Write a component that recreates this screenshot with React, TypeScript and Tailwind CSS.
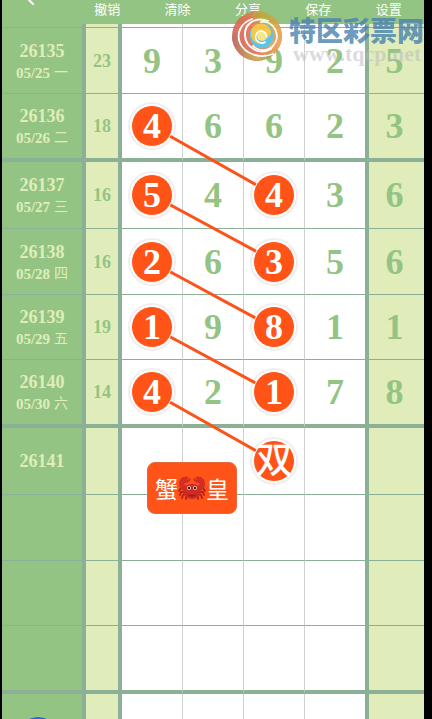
import { Fragment } from 'react';
import { ChevronLeft } from 'lucide-react';

type Link = 'even' | 'thick';

interface Draw {
  issue?: string;
  date?: string;
  weekday?: string;
  sum?: number;
  digits?: (string | number)[];
  picks?: number[];
  link?: Link;
}

const menu = ['撤销', '清除', '分享', '保存', '设置'];

const firstRows: Draw[] = [
  { issue: '26135', date: '05/25', weekday: '一', sum: 23, digits: [9, 3, 9, 2, 5] },
  { issue: '26136', date: '05/26', weekday: '二', sum: 18, digits: [4, 6, 6, 2, 3], picks: [0], link: 'thick' },
];

const groups: Draw[][] = [
  [
    { issue: '26137', date: '05/27', weekday: '三', sum: 16, digits: [5, 4, 4, 3, 6], picks: [0, 2], link: 'even' },
    { issue: '26138', date: '05/28', weekday: '四', sum: 16, digits: [2, 6, 3, 5, 6], picks: [0, 2], link: 'even' },
    { issue: '26139', date: '05/29', weekday: '五', sum: 19, digits: [1, 9, 8, 1, 1], picks: [0, 2], link: 'even' },
    { issue: '26140', date: '05/30', weekday: '六', sum: 14, digits: [4, 2, 1, 7, 8], picks: [0, 2], link: 'thick' },
  ],
  [{ issue: '26141', digits: ['', '', '双', '', ''], picks: [2] }, {}, {}, {}],
];

const groupHeights = ['h-[67px]', 'h-[66px]', 'h-[65px]', 'h-[68px]'];

// runs from the first ball of a row to the third-column ball of the next row
function Connector({ link }: { link: Link }) {
  return (
    <svg
      className={`pointer-events-none absolute left-1/2 top-1/2 z-10 w-[calc(200%+2px)] overflow-visible ${link === 'even' ? 'h-[66px]' : 'h-[69px]'}`}
    >
      <line x1="0" y1="0" x2="100%" y2="100%" stroke="#fb5319" strokeWidth="3" />
    </svg>
  );
}

function Ball({ value, link }: { value: string | number; link?: Link }) {
  return (
    <>
      <span className="absolute left-1/2 top-1/2 size-12 -translate-x-1/2 -translate-y-1/2 rounded-full border-2 border-[#f2eeee] bg-white" />
      {link && <Connector link={link} />}
      <span
        className={`absolute left-1/2 top-1/2 z-20 flex size-[42px] -translate-x-1/2 -translate-y-1/2 items-center justify-center rounded-full border border-white bg-[#ff5317] text-white ${typeof value === 'string' ? 'font-medium' : ''}`}
      >
        {value}
      </span>
    </>
  );
}

function Row({ row, height, thick }: { row: Draw; height: string; thick?: boolean }) {
  const line = thick ? 'border-b-4' : 'border-b';
  return (
    <tr className={height}>
      <th scope="row" className={`${line} border-r-4 border-[#8bb096] bg-[#93c483] p-0 text-center font-bold text-[#e0edbb]`}>
        <div className="text-lg leading-5">{row.issue}</div>
        {row.date && (
          <div className="mt-1 flex items-center justify-center gap-1 text-[15px] leading-4">
            {row.date} <span className="text-sm leading-4 font-normal">{row.weekday}</span>
          </div>
        )}
      </th>
      <td className={`${line} border-r-4 border-[#8bb096] bg-[#e0edbb] p-0 text-center text-lg font-bold text-[#93c483]`}>
        {row.sum}
      </td>
      {[0, 1, 2, 3, 4].map((i) => {
        const value = row.digits?.[i] ?? '';
        const side =
          i === 3
            ? 'border-r-4 border-r-[#8bb096] bg-white'
            : i === 4
              ? 'bg-[#e0edbb] pr-1'
              : 'border-r border-r-[#ccd2ce] bg-white';
        return (
          <td
            key={i}
            className={`relative p-0 ${line} ${side} border-b-[#8bb096] text-center text-4xl leading-none font-bold text-[#93c483]`}
          >
            {row.picks?.includes(i) ? <Ball value={value} link={i === 0 ? row.link : undefined} /> : value}
          </td>
        );
      })}
    </tr>
  );
}

function Crab() {
  return (
    <svg viewBox="0 0 28 24" className="h-6 w-7" aria-hidden="true">
      <g fill="none" stroke="#b3211c" strokeWidth="1.8" strokeLinecap="round" strokeLinejoin="round">
        <path d="M7 14 3 12 1 15M7 16 3 16 2 19M8 18 5 19 4 22M10 19 8 21 8 23" />
        <path d="M21 14 25 12 27 15M21 16 25 16 26 19M20 18 23 19 24 22M18 19 20 21 20 23" />
      </g>
      <path d="M11 1C5 -1 1 3 1 8 1 12 4 14 8 15L10 11C7 10 6 8 7 7 10 7 13 5 13 2L9 4Z" fill="#d42d26" />
      <path d="M17 1C23 -1 27 3 27 8 27 12 24 14 20 15L18 11C21 10 22 8 21 7 18 7 15 5 15 2L19 4Z" fill="#d42d26" />
      <path d="M5 15C6 9 10 8 14 8S22 9 23 15C23 20 18 23 14 23S5 20 5 15Z" fill="#cf2a24" />
      <path d="M9 18Q14 20 19 18Q17 21 14 21T9 18Z" fill="#9c1b17" />
      <circle cx="11" cy="12" r="2" fill="#e5d3c6" />
      <circle cx="17" cy="12" r="2" fill="#e5d3c6" />
      <circle cx="11" cy="12" r="1.2" fill="#35201c" />
      <circle cx="17" cy="12" r="1.2" fill="#35201c" />
    </svg>
  );
}

function Swirl() {
  return (
    <svg viewBox="0 0 52 52" className="size-13 shrink-0" aria-hidden="true">
      <defs>
        <linearGradient id="shell" x1="0" y1="0.6" x2="1" y2="0.3">
          <stop offset="0" stopColor="#cb6459" />
          <stop offset="0.45" stopColor="#e8704f" />
          <stop offset="0.7" stopColor="#e9a04f" />
          <stop offset="1" stopColor="#e5805a" />
        </linearGradient>
        <linearGradient id="crest" x1="0" y1="0" x2="1" y2="0.6">
          <stop offset="0" stopColor="#d9724f" />
          <stop offset="0.4" stopColor="#b9ad38" />
          <stop offset="1" stopColor="#e6a04d" />
        </linearGradient>
        <linearGradient id="keel" x1="0" y1="0" x2="1" y2="0">
          <stop offset="0" stopColor="#b85f5c" />
          <stop offset="0.6" stopColor="#c9a845" />
          <stop offset="1" stopColor="#7fae4c" />
        </linearGradient>
      </defs>
      <circle cx="26" cy="26" r="25" fill="url(#shell)" />
      <path d="M14 5C27 -3 46 3 50 20C52 28 50 34 46 40C48 22 36 8 14 5Z" fill="url(#crest)" />
      <path d="M1 27C2 46 24 58 42 45C26 47 9 42 5 22Z" fill="url(#keel)" />
      <path d="M19 28C17 17 26 11 35 14C43 18 45 28 39 35C32 42 21 38 19 28Z" fill="#4fbfe2" />
      <path d="M20 25C19 16 28 11 35 15C40 18 42 23 38 27C35 20 27 20 25 26C25 29 27 32 30 33C25 34 21 31 20 25Z" fill="#f7c332" />
      <circle cx="31" cy="26" r="5" fill="#fbe27a" />
      <g fill="none" stroke="#fff" strokeLinecap="round">
        <path d="M21 9C10 13 5 23 9 33C14 44 28 49 42 44" strokeWidth="1.8" />
        <path d="M37 11C24 6 13 14 14 26C15 37 28 46 40 39" strokeWidth="2" />
        <path d="M30 12C43 10 51 26 42 36C36 42 27 41 22 36" strokeWidth="1.8" />
        <path d="M36 27C35 20 27 19 25 25C23 31 30 35 34 32" strokeWidth="1.6" />
      </g>
    </svg>
  );
}

export default function App() {
  return (
    <div className="h-screen overflow-hidden bg-black pr-2 pl-0.5">
      <div className='relative h-full overflow-hidden bg-[#93c483] font-["Liberation_Serif","Noto_Sans_CJK_SC",serif]'>
        <header className='flex h-6 items-start font-["Noto_Sans_CJK_SC",sans-serif] text-white'>
          <button aria-label="返回" className="-mt-3.5 w-[70px] shrink-0 pl-4">
            <ChevronLeft className="size-6" />
          </button>
          <nav className="flex flex-1 justify-around">
            {menu.map((item) => (
              <button key={item} className="text-[13px] leading-[18px]">
                {item}
              </button>
            ))}
          </nav>
        </header>

        <table className="w-full table-fixed border-separate border-spacing-0">
          <colgroup>
            <col className="w-[84px]" />
            <col className="w-9" />
            <col />
            <col />
            <col />
            <col className="w-16" />
            <col className="w-[55px]" />
          </colgroup>
          <tbody>
            <Row row={{}} height="h-1" />
            <Row row={firstRows[0]} height="h-[66px]" />
            <Row row={firstRows[1]} height="h-[68px]" thick />
            {groups.map((rows, g) => (
              <Fragment key={g}>
                {rows.map((row, i) => (
                  <Row key={i} row={row} height={groupHeights[i]} thick={i === 3} />
                ))}
              </Fragment>
            ))}
            <Row row={{}} height="h-[67px]" />
          </tbody>
        </table>

        <div className='absolute top-[462px] left-[145px] z-30 flex items-center rounded-lg border border-[#e8663c] bg-[#ff5317] px-[7px] py-2 font-["Noto_Sans_CJK_SC",sans-serif] text-[23px] leading-[34px] text-white'>
          蟹
          <Crab />
          皇
        </div>

        <div className="pointer-events-none absolute top-[10px] right-0 z-30 flex items-start gap-1.5 opacity-90">
          <Swirl />
          <div className="pt-1">
            <div className='font-["Noto_Sans_CJK_SC",sans-serif] text-[27px] leading-8 font-black text-[#4a82b0]/90'>特区彩票网</div>
            <div className="-mt-1 pl-1 text-[22px] leading-6 font-bold text-[#bbb]/60">www.tqcp.net</div>
          </div>
        </div>

        <button aria-label="更多" className="absolute -bottom-[38px] left-4 z-30 size-10 rounded-full bg-[#2f63d8]" />
      </div>
    </div>
  );
}
